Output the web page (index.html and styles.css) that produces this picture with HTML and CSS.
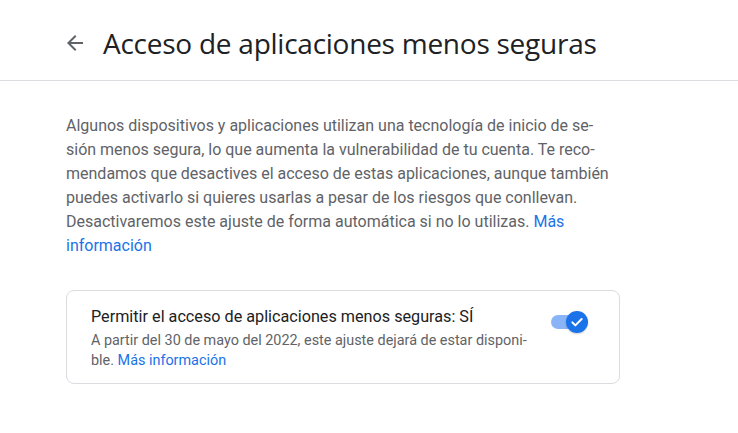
FILE: index.html
```html
<!DOCTYPE html>
<html lang="es">
<head>
<meta charset="utf-8">
<link rel="stylesheet" href="styles.css">
</head>
<body>
<header class="header">
  <div class="header-inner">
    <span class="back" aria-label="Atrás">
      <svg width="24" height="24" viewBox="0 0 24 24"><path d="M20 11H7.83l5.59-5.59L12 4l-8 8 8 8 1.41-1.41L7.83 13H20v-2z" fill="#5f6368"/></svg>
    </span>
    <h1 class="title">Acceso de aplicaciones menos seguras</h1>
  </div>
</header>
<main class="main">
  <p class="intro">Algunos dispositivos y aplicaciones utilizan una tecnología de inicio de se-<br>sión menos segura, lo que aumenta la vulnerabilidad de tu cuenta. Te reco-<br>mendamos que desactives el acceso de estas aplicaciones, aunque también<br>puedes activarlo si quieres usarlas a pesar de los riesgos que conllevan.<br>Desactivaremos este ajuste de forma automática si no lo utilizas. <a class="link" href="#">Más<br>información</a></p>
  <section class="card">
    <div class="card-text">
      <div class="card-title">Permitir el acceso de aplicaciones menos seguras: SÍ</div>
      <div class="card-sub">A partir del 30 de mayo del 2022, este ajuste dejará de estar disponi-<br>ble. <a class="link" href="#">Más información</a></div>
    </div>
    <div class="toggle">
      <span class="track"></span>
      <span class="thumb">
        <svg width="16" height="16" viewBox="0 0 24 24"><path d="M5 12.5l4.5 4.5L19 7.5" fill="none" stroke="#fff" stroke-width="3" stroke-linecap="round" stroke-linejoin="round"/></svg>
      </span>
    </div>
  </section>
</main>
</body>
</html>
```

FILE: styles.css
```css
* { box-sizing: border-box; }
html, body { margin: 0; padding: 0; background: #fff; }
body { font-family: Roboto, "Noto Sans", Arial, sans-serif; color: #202124; }
.header { border-bottom: 1px solid #dadce0; }
.header-inner { display: flex; align-items: center; height: 80px; padding-left: 63px; padding-top: 6px; }
.back { display: flex; width: 24px; height: 24px; margin-right: 16px; }
.title { margin: 0; font-family: "Open Sans", Roboto, sans-serif; font-weight: 400; font-size: 28px; color: #202124; letter-spacing: -0.25px; }
.main { padding: 33px 0 0 66px; }
.intro { margin: 0; width: 560px; font-size: 16px; line-height: 24px; color: #5f6368; }
.link { color: #1a73e8; text-decoration: none; }
.card { margin-top: 32px; width: 554px; border: 1px solid #dadce0; border-radius: 8px; display: flex; align-items: flex-start; padding: 15px 24px 12px 24px; }
.card-text { flex: 1; }
.card-title { font-size: 16.2px; line-height: 22px; color: #202124; }
.card-sub { font-size: 14.4px; line-height: 20px; color: #5f6368; margin-top: 3px; }
.toggle { position: relative; width: 37px; height: 22px; margin-top: 5px; margin-right: 7px; }
.track { position: absolute; left: 0; top: 4px; width: 34px; height: 14px; border-radius: 7px; background: #8ab4f8; }
.thumb { position: absolute; left: 15px; top: 0; width: 22px; height: 22px; border-radius: 50%; background: #1a73e8; display: flex; align-items: center; justify-content: center; box-shadow: 0 1px 2px rgba(0,0,0,.2); }
```
